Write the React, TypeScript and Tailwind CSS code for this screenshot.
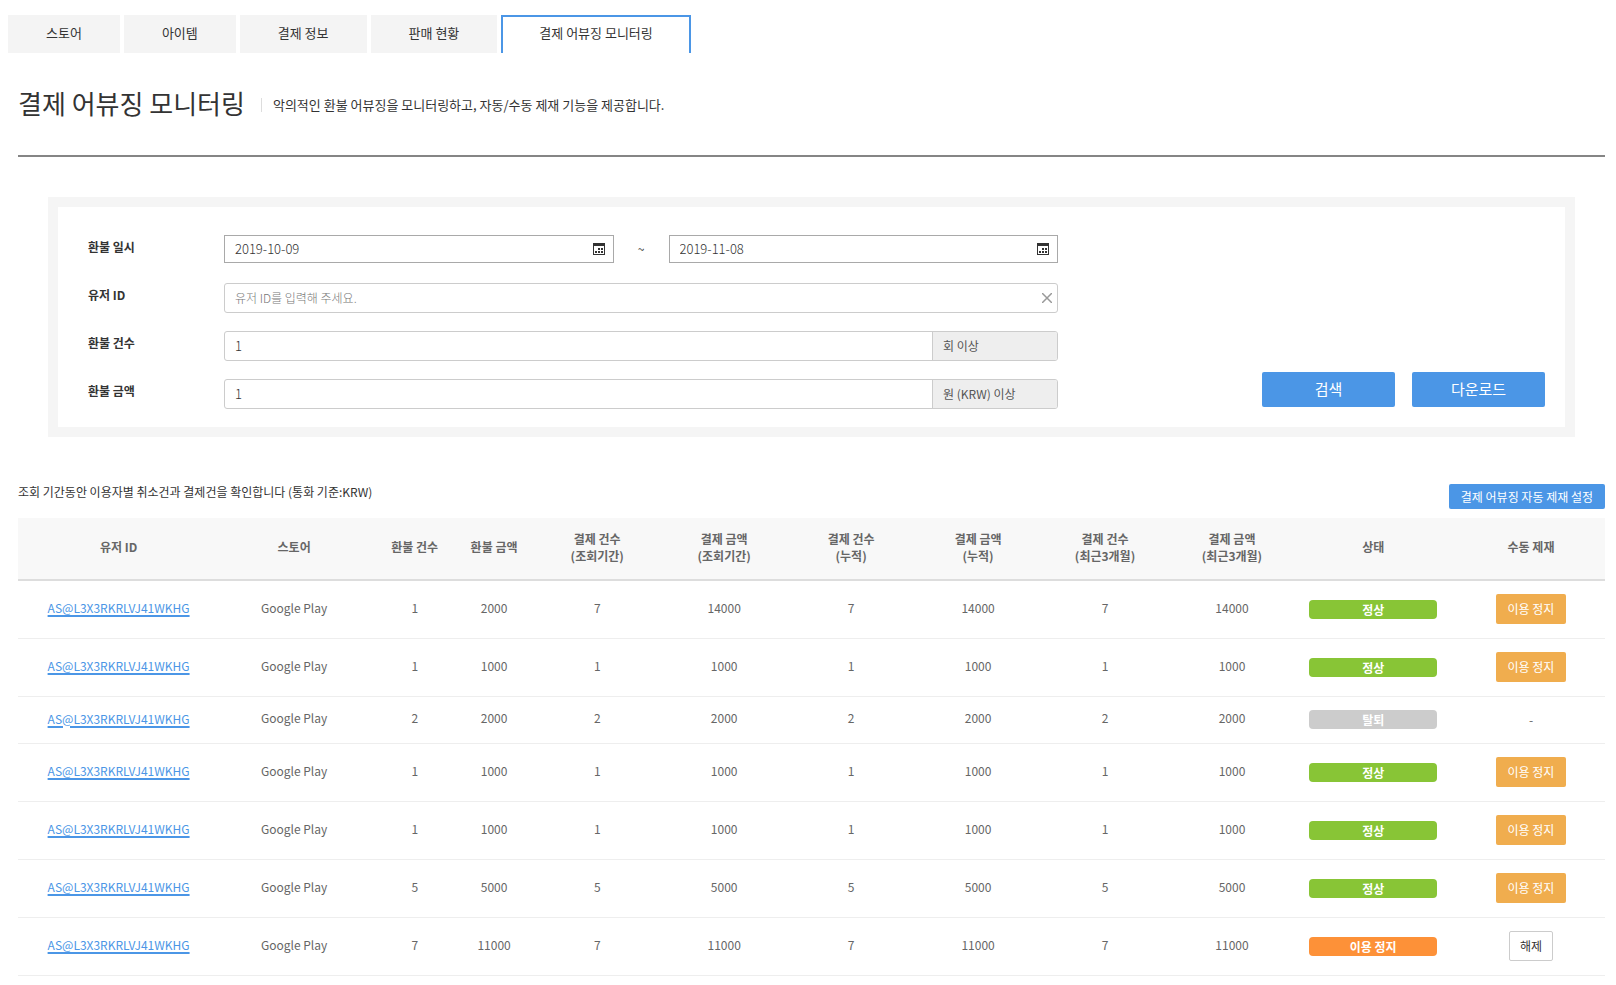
import { useState } from "react"
import clsx from "clsx"

type Status = "정상" | "탈퇴" | "이용 정지"

interface AbuseRow {
  refundCount: number
  refundAmount: number
  payCount: number
  payAmount: number
  status: Status
}

const TABS = ["스토어", "아이템", "결제 정보", "판매 현황", "결제 어뷰징 모니터링"]

const COLUMNS: { label: string; sub?: string; width: string }[] = [
  { label: "유저 ID", width: "w-[12.3%]" },
  { label: "스토어", width: "w-[10.2%]" },
  { label: "환불 건수", width: "w-[5%]" },
  { label: "환불 금액", width: "w-[5%]" },
  { label: "결제 건수", sub: "(조회기간)", width: "w-[8%]" },
  { label: "결제 금액", sub: "(조회기간)", width: "w-[8%]" },
  { label: "결제 건수", sub: "(누적)", width: "w-[8%]" },
  { label: "결제 금액", sub: "(누적)", width: "w-[8%]" },
  { label: "결제 건수", sub: "(최근3개월)", width: "w-[8%]" },
  { label: "결제 금액", sub: "(최근3개월)", width: "w-[8%]" },
  { label: "상태", width: "w-[9.8%]" },
  { label: "수동 제재", width: "w-[9.7%]" },
]

const USER_ID = "AS@L3X3RKRLVJ41WKHG"

const ROWS: AbuseRow[] = [
  { refundCount: 1, refundAmount: 2000, payCount: 7, payAmount: 14000, status: "정상" },
  { refundCount: 1, refundAmount: 1000, payCount: 1, payAmount: 1000, status: "정상" },
  { refundCount: 2, refundAmount: 2000, payCount: 2, payAmount: 2000, status: "탈퇴" },
  { refundCount: 1, refundAmount: 1000, payCount: 1, payAmount: 1000, status: "정상" },
  { refundCount: 1, refundAmount: 1000, payCount: 1, payAmount: 1000, status: "정상" },
  { refundCount: 5, refundAmount: 5000, payCount: 5, payAmount: 5000, status: "정상" },
  { refundCount: 7, refundAmount: 11000, payCount: 7, payAmount: 11000, status: "이용 정지" },
]

const STATUS_COLORS: Record<Status, string> = {
  정상: "bg-[#88c536]",
  탈퇴: "bg-[#cccccc]",
  "이용 정지": "bg-[#fd9138]",
}

function CalendarIcon() {
  return (
    <svg width="12" height="12" viewBox="0 0 12 12" fill="#333" shapeRendering="crispEdges" aria-hidden="true">
      <path d="M0 0h12v12H0zM1 3v8h10V3z" fillRule="evenodd" />
      <path d="M5 5h2v2H5zM8 5h2v2H8zM2 8h2v2H2zM5 8h2v2H5zM8 8h2v2H8z" />
    </svg>
  )
}

function DateField({ id, label, initial }: { id: string; label: string; initial: string }) {
  const [value, setValue] = useState(initial)
  return (
    <div className="flex h-7 min-w-0 flex-1 items-center border border-[#a9a9a9] pr-2">
      <input
        id={id}
        aria-label={label}
        value={value}
        onChange={(e) => setValue(e.target.value)}
        className="min-w-0 flex-1 px-[10px] text-[13px] font-light outline-none"
      />
      <button type="button" aria-label={`${label} 선택`}>
        <CalendarIcon />
      </button>
    </div>
  )
}

function AmountField({ id, unit }: { id: string; unit: string }) {
  const [value, setValue] = useState("1")
  return (
    <div className="flex h-[30px] flex-1 overflow-hidden rounded-[3px] border border-[#cccccc]">
      <input
        id={id}
        value={value}
        onChange={(e) => setValue(e.target.value)}
        className="min-w-0 flex-1 px-[10px] text-[13px] font-light outline-none"
      />
      <span className="flex w-[125px] items-center border-l border-[#cccccc] bg-[#eeeeee] pl-[10px] text-xs text-[#555]">
        {unit}
      </span>
    </div>
  )
}

function FormRow({ id, label, children }: { id: string; label: string; children: React.ReactNode }) {
  return (
    <div className="flex h-[30px] items-start">
      <label htmlFor={id} className="w-[136px] text-xs leading-6 font-bold">
        {label}
      </label>
      {children}
    </div>
  )
}

function SearchPanel() {
  const [userId, setUserId] = useState("")
  return (
    <form
      className="mx-[30px] flex items-end border-10 border-[#f5f5f5] pt-[28px] pr-5 pb-[18px] pl-[30px]"
      onSubmit={(e) => e.preventDefault()}
    >
      <div className="flex flex-1 flex-col gap-[18px]">
        <FormRow id="date-from" label="환불 일시">
          <DateField id="date-from" label="환불 일시 시작" initial="2019-10-09" />
          <span className="w-[55px] text-center text-xs leading-7">~</span>
          <DateField id="date-to" label="환불 일시 종료" initial="2019-11-08" />
        </FormRow>
        <FormRow id="user-id" label="유저 ID">
          <div className="flex h-[30px] flex-1 items-center rounded-[3px] border border-[#cccccc] pr-[5px]">
            <input
              id="user-id"
              value={userId}
              onChange={(e) => setUserId(e.target.value)}
              placeholder="유저 ID를 입력해 주세요."
              className="min-w-0 flex-1 px-[10px] text-xs font-light outline-none placeholder:text-[#777]"
            />
            <button type="button" aria-label="지우기" onClick={() => setUserId("")}>
              <svg width="10" height="10" viewBox="0 0 10 10" stroke="#999" strokeWidth="1.5" aria-hidden="true">
                <path d="M0 0l10 10M10 0L0 10" />
              </svg>
            </button>
          </div>
        </FormRow>
        <FormRow id="refund-count" label="환불 건수">
          <AmountField id="refund-count" unit="회 이상" />
        </FormRow>
        <FormRow id="refund-amount" label="환불 금액">
          <AmountField id="refund-amount" unit="원 (KRW) 이상" />
        </FormRow>
      </div>
      <div className="mb-[2px] ml-[204px] flex gap-[17px]">
        <button type="submit" className="h-[35px] w-[133px] rounded-xs bg-[#4b96e6] text-[15px] text-white">
          검색
        </button>
        <button type="button" className="h-[35px] w-[133px] rounded-xs bg-[#4b96e6] text-[15px] text-white">
          다운로드
        </button>
      </div>
    </form>
  )
}

function ManualAction({ status }: { status: Status }) {
  if (status === "탈퇴") return <>-</>
  if (status === "이용 정지") {
    return (
      <button type="button" className="h-[30px] rounded-xs border border-[#cccccc] px-[10px] align-top text-[#333]">
        해제
      </button>
    )
  }
  return (
    <button type="button" className="h-[30px] w-[70px] rounded-xs bg-[#f0ad4e] align-top text-white">
      이용 정지
    </button>
  )
}

function AbuseTable() {
  return (
    <table className="w-full table-fixed border-collapse text-center text-xs text-[#666]">
      <thead>
        <tr className="h-[62px] border-b-2 border-[#dddddd] bg-[#f8f8f8]">
          {COLUMNS.map((col, i) => (
            <th
              key={i}
              className={clsx("pb-1 leading-[17px] font-bold first:pl-[6px] last:pl-[6px]", col.width)}
            >
              {col.label}
              {col.sub && (
                <>
                  <br />
                  {col.sub}
                </>
              )}
            </th>
          ))}
        </tr>
      </thead>
      <tbody>
        {ROWS.map((row, i) => (
          <tr key={i} className="border-b border-[#eeeeee]">
            <td className="pb-[3px] pl-[6px]">
              <a href="#user" className="text-[#4b96e6] underline decoration-2 underline-offset-2">
                {USER_ID}
              </a>
            </td>
            <td className="pb-1">Google Play</td>
            <td className="pb-1">{row.refundCount}</td>
            <td className="pb-1">{row.refundAmount}</td>
            <td className="pb-1">{row.payCount}</td>
            <td className="pb-1">{row.payAmount}</td>
            <td className="pb-1">{row.payCount}</td>
            <td className="pb-1">{row.payAmount}</td>
            <td className="pb-1">{row.payCount}</td>
            <td className="pb-1">{row.payAmount}</td>
            <td className="px-[14px] pt-[13px] pb-[14px]">
              <span className={clsx("block h-[19px] rounded-sm leading-[19px] font-bold text-white", STATUS_COLORS[row.status])}>
                {row.status}
              </span>
            </td>
            <td className="pt-[13px] pb-[14px] pl-[6px]">
              <ManualAction status={row.status} />
            </td>
          </tr>
        ))}
      </tbody>
    </table>
  )
}

export default function App() {
  const [active, setActive] = useState(4)
  return (
    <div className="min-h-screen bg-white pt-[15px] font-['Noto_Sans_CJK_KR','Noto_Sans',sans-serif] text-[#333]">
      <nav className="flex gap-1 pl-2">
        {TABS.map((tab, i) => (
          <button
            key={tab}
            type="button"
            onClick={() => setActive(i)}
            className={clsx(
              "h-[38px] border-x-2 border-t-2 px-9 pb-[5px] text-[13px]",
              i === active ? "border-[#4b96e6] bg-white" : "border-[#f4f4f4] bg-[#f4f4f4]"
            )}
          >
            {tab}
          </button>
        ))}
      </nav>

      <main className="pr-[11px] pl-[18px]">
        <header className="mb-10 flex items-center border-b-2 border-[#858585] pt-[32px] pb-[34px]">
          <h1 className="text-[26px] leading-9">결제 어뷰징 모니터링</h1>
          <p className="mt-1 ml-4 border-l border-[#dddddd] pl-[11px] text-[13px] leading-[14px]">
            악의적인 환불 어뷰징을 모니터링하고, 자동/수동 제재 기능을 제공합니다.
          </p>
        </header>

        <SearchPanel />

        <section className="mt-[47px]">
          <div className="mb-[9px] flex items-start justify-between">
            <p className="text-xs leading-4">
              조회 기간동안 이용자별 취소건과 결제건을 확인합니다 (통화 기준:KRW)
            </p>
            <button type="button" className="h-[25px] rounded-xs bg-[#4b96e6] px-3 text-xs text-white">
              결제 어뷰징 자동 제재 설정
            </button>
          </div>
          <AbuseTable />
        </section>
      </main>
    </div>
  )
}
